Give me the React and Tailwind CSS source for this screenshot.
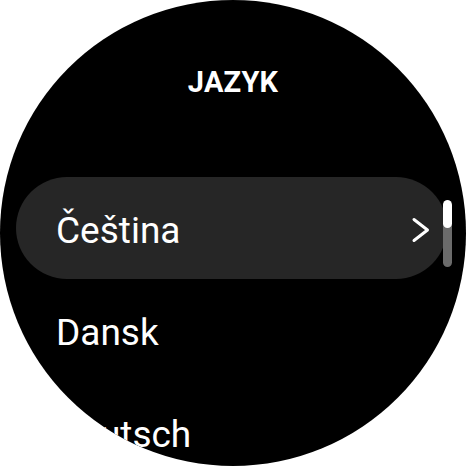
import React from "react";

const LANGUAGES = ["Čeština", "Dansk", "Deutsch"];

function Chevron() {
  return (
    <svg width="20" height="26" viewBox="0 0 20 26" fill="none">
      <path d="M3 2.5 L16.5 13 L3 23.5" stroke="white" strokeWidth="3" strokeLinecap="round" strokeLinejoin="round" />
    </svg>
  );
}

export default function App() {
  return (
    <div className="w-[466px] h-[466px] bg-white" style={{ fontFamily: "Roboto, 'Liberation Sans', sans-serif" }}>
      <div className="relative w-[466px] h-[466px] rounded-full bg-black overflow-hidden flex flex-col">
        {/* Header */}
        <div className="h-[177px] shrink-0 pt-[68px] flex justify-center">
          <h1 className="text-[29px] leading-[29px] font-bold text-white tracking-[0.2px]">JAZYK</h1>
        </div>

        {/* List */}
        <div className="flex flex-col shrink-0">
          {LANGUAGES.map((lang, i) => (
            <div
              key={lang}
              className={`h-[102px] shrink-0 ml-4 mr-[19px] flex items-center justify-between pl-10 pr-4 pt-1 rounded-full ${
                i === 0 ? "bg-[#262626]" : ""
              }`}
            >
              <span className="text-[37px] leading-[37px] text-white">{lang}</span>
              {i === 0 && <Chevron />}
            </div>
          ))}
        </div>

        {/* Scrollbar */}
        <div className="absolute left-[443px] top-[200px] w-[9px] h-[67px] rounded-full bg-[#6b6b6b] overflow-hidden">
          <div className="h-[28px] w-full rounded-full bg-white" />
        </div>
      </div>
    </div>
  );
}
